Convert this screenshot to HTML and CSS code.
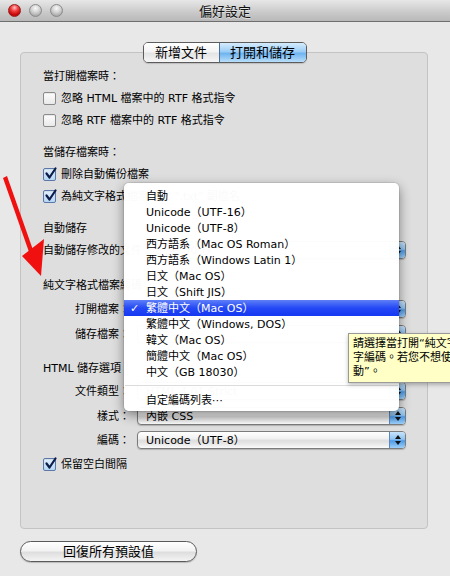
FILE: index.html
```html
<!DOCTYPE html>
<html lang="zh-Hant">
<head>
  <meta charset="UTF-8" />
  <title>偏好設定</title>
  <link rel="stylesheet" href="styles.css">
</head>
<body>
  <div class="window">
    <div class="titlebar">
      <div class="lights">
        <span class="light red"></span>
        <span class="light"></span>
        <span class="light"></span>
      </div>
      <div class="title">偏好設定</div>
      <div></div>
    </div>

    <div class="pane">
      <div class="tabs">
        <span class="tab">新增文件</span>
        <span class="tab on">打開和儲存</span>
      </div>

      <div class="row first">當打開檔案時：</div>
      <div class="row check"><span class="box"></span>忽略 HTML 檔案中的 RTF 格式指令</div>
      <div class="row check"><span class="box"></span>忽略 RTF 檔案中的 RTF 格式指令</div>

      <div class="row section">當儲存檔案時：</div>
      <div class="row check"><span class="box on"><svg viewBox="0 0 13 13"><path d="M2.5 6.5 L5.5 10.5 L11.5 1.5" /></svg></span>刪除自動備份檔案</div>
      <div class="row check"><span class="box on"><svg viewBox="0 0 13 13"><path d="M2.5 6.5 L5.5 10.5 L11.5 1.5" /></svg></span>為純文字格式檔案加上 ".txt" 副檔名</div>

      <div class="row section">自動儲存</div>
      <div class="row inline">
        <span>自動儲存修改的文件：</span>
        <div class="popup"><span class="val">每 30 秒</span><span class="cap"><svg viewBox="0 0 16 16"><path d="M5 7 L8 3 L11 7Z M5 9 L8 13 L11 9Z" /></svg></span></div>
      </div>

      <div class="row section2">純文字格式檔案編碼：</div>
      <div class="field f-open">
        <span class="lbl">打開檔案：</span>
        <div class="popup"><span class="val">繁體中文（Mac OS）</span><span class="cap"><svg viewBox="0 0 16 16"><path d="M5 7 L8 3 L11 7Z M5 9 L8 13 L11 9Z" /></svg></span></div>
      </div>
      <div class="field f-save">
        <span class="lbl">儲存檔案：</span>
        <div class="popup"><span class="val">自動</span><span class="cap"><svg viewBox="0 0 16 16"><path d="M5 7 L8 3 L11 7Z M5 9 L8 13 L11 9Z" /></svg></span></div>
      </div>

      <div class="row section3">HTML 儲存選項</div>
      <div class="field f-type">
        <span class="lbl">文件類型：</span>
        <div class="popup"><span class="val">HTML 4.01 Strict</span><span class="cap"><svg viewBox="0 0 16 16"><path d="M5 7 L8 3 L11 7Z M5 9 L8 13 L11 9Z" /></svg></span></div>
      </div>
      <div class="field f-style">
        <span class="lbl">樣式：</span>
        <div class="popup"><span class="val">內嵌 CSS</span><span class="cap"><svg viewBox="0 0 16 16"><path d="M5 7 L8 3 L11 7Z M5 9 L8 13 L11 9Z" /></svg></span></div>
      </div>
      <div class="field f-enc">
        <span class="lbl">編碼：</span>
        <div class="popup"><span class="val">Unicode（UTF-8）</span><span class="cap"><svg viewBox="0 0 16 16"><path d="M5 7 L8 3 L11 7Z M5 9 L8 13 L11 9Z" /></svg></span></div>
      </div>
      <div class="row check last"><span class="box on"><svg viewBox="0 0 13 13"><path d="M2.5 6.5 L5.5 10.5 L11.5 1.5" /></svg></span>保留空白間隔</div>
    </div>

    <button class="reset">回復所有預設值</button>

    <!-- 打開的編碼選單 -->
    <div class="menu">
      <div class="item">自動</div>
      <div class="item">Unicode（UTF-16）</div>
      <div class="item">Unicode（UTF-8）</div>
      <div class="item">西方語系（Mac OS Roman）</div>
      <div class="item">西方語系（Windows Latin 1）</div>
      <div class="item">日文（Mac OS）</div>
      <div class="item">日文（Shift JIS）</div>
      <div class="item sel"><span class="tick">✓</span>繁體中文（Mac OS）</div>
      <div class="item">繁體中文（Windows, DOS）</div>
      <div class="item">韓文（Mac OS）</div>
      <div class="item">簡體中文（Mac OS）</div>
      <div class="item">中文（GB 18030）</div>
      <div class="sep"></div>
      <div class="item">自定編碼列表⋯</div>
    </div>

    <div class="tip">請選擇當打開“純文字格式”檔案時所使用的文<br>字編碼。若您不想使用特定的編碼，請選擇“自<br>動”。</div>

    <svg class="arrow" viewBox="0 0 60 110" width="60" height="110">
      <path d="M3 6 L7 4 L33 78 L29 80Z" fill="#f01010" />
      <path d="M22 84 L44 67 L41 104Z" fill="#f01010" />
    </svg>
  </div>
</body>
</html>
```

FILE: styles.css
```css
* {
  margin: 0;
  padding: 0;
  box-sizing: border-box;
}
body {
  width: 450px;
  height: 576px;
  overflow: hidden;
  background: #e8e8e8;
}
.window {
  position: relative;
  width: 450px;
  height: 576px;
  overflow: hidden;
  background: #e8e8e8;
  font-family: "DejaVu Sans", "Noto Sans CJK TC", sans-serif;
  font-size: 11px;
  color: #000;
}

/* title bar */
.titlebar {
  display: grid;
  grid-template-columns: 1fr auto 1fr;
  align-items: center;
  height: 22px;
  background: linear-gradient(#e7e7e7, #c9c9c9 60%, #b9b9b9);
  border-bottom: 1px solid #6e6e6e;
}
.lights {
  display: flex;
  gap: 8px;
  padding-left: 8px;
}
.light {
  width: 13px;
  height: 13px;
  border-radius: 50%;
  border: 1px solid #8a8a8a;
  background: radial-gradient(circle at 50% 30%, #fafafa, #d0d0d0 45%, #a8a8a8 80%, #c8c8c8);
}
.light.red {
  border-color: #9a1a1a;
  background: radial-gradient(circle at 50% 25%, #ffc2c2 0, #f04040 35%, #c00000 75%, #e84848);
}
.title {
  font-size: 13px;
  color: #111;
  text-shadow: 0 1px 0 rgba(255,255,255,0.5);
}

/* group box */
.pane {
  margin: 30px 0 0 20px;
  width: 408px;
  padding: 0 21px 55px 22px;
  background: #dedede;
  border: 1px solid #c3c3c3;
  border-radius: 4px;
}
.tabs {
  display: flex;
  width: 164px;
  height: 21px;
  margin: -11px auto 0;
  border: 1px solid #5c5c5c;
  border-radius: 5px;
  overflow: hidden;
  font-size: 13px;
  line-height: 19px;
  box-shadow: 0 1px 1px rgba(0,0,0,0.15);
}
.tab {
  width: 75px;
  text-align: center;
  background: linear-gradient(#ffffff, #f4f4f4 45%, #e4e4e4 55%, #f6f6f6);
}
.tab.on {
  flex: 1;
  border-left: 1px solid #4c6f9a;
  background: linear-gradient(#d6ecfd, #9ccdf7 45%, #6fb4f1 55%, #b8def9);
}

.row {
  height: 18px;
  line-height: 19px;
  margin-top: 4px;
  white-space: nowrap;
}
.row.first { margin-top: 4px; }
.row.section { margin-top: 14px; }
.row.section2 { margin-top: 17px; }
.row.section3 { margin-top: 16px; }
.row.last { margin-top: 6px; }
.check {
  display: flex;
  align-items: center;
}
.box {
  width: 13px;
  height: 13px;
  margin-right: 5px;
  border: 1px solid #8b8b8b;
  border-radius: 2px;
  background: linear-gradient(#fdfdfd, #e9e9e9);
  box-shadow: inset 0 1px 1px rgba(0,0,0,0.08);
}
.box.on {
  border-color: #5a78a8;
  background: linear-gradient(#e4f0fc, #b6d6f5);
}
.box svg {
  display: block;
  width: 13px;
  height: 13px;
  margin: -2px 0 0 0;
  overflow: visible;
}
.box path {
  fill: none;
  stroke: #0d1d4a;
  stroke-width: 2.2;
  stroke-linecap: round;
  stroke-linejoin: round;
}

.inline {
  display: flex;
  gap: 7px;
}
.inline .popup { flex: 1; }

.field {
  display: grid;
  grid-template-columns: 87px 1fr;
  column-gap: 7px;
  height: 18px;
  line-height: 19px;
}
.f-open { margin-top: 6px; }
.f-save { margin-top: 7px; }
.f-type { margin-top: 5px; }
.f-style { margin-top: 7px; }
.f-enc { margin-top: 6px; }
.lbl {
  text-align: right;
  white-space: nowrap;
}

.popup {
  display: flex;
  height: 18px;
  border: 1px solid #7b7b7b;
  border-radius: 4px;
  overflow: hidden;
  background: linear-gradient(#ffffff, #f1f1f1 40%, #dddddd 55%, #ececec 80%, #fbfbfb);
  box-shadow: 0 1px 1px rgba(0,0,0,0.2);
}
.popup .val {
  flex: 1;
  padding-left: 8px;
  line-height: 17px;
  white-space: nowrap;
  overflow: hidden;
}
.popup .cap {
  width: 16px;
  border-left: 1px solid #5f86b8;
  background: linear-gradient(#c8e3fb, #8ec4f3 45%, #4d9ae8 55%, #9ed0f8);
}
.cap svg {
  display: block;
  width: 16px;
  height: 16px;
}
.cap path { fill: #111; }

.reset {
  display: block;
  margin: 12px 0 0 20px;
  width: 177px;
  height: 21px;
  border: 1px solid #5a5a5a;
  border-radius: 11px;
  background: linear-gradient(#ffffff, #f3f3f3 45%, #dedede 55%, #f4f4f4);
  font-family: "DejaVu Sans", "Noto Sans CJK TC", sans-serif;
  font-size: 13px;
  line-height: 19px;
  color: #000;
  box-shadow: 0 1px 1px rgba(0,0,0,0.2);
}

/* open popup menu */
.menu {
  position: absolute;
  left: 124px;
  top: 183px;
  width: 275px;
  height: 228px;
  padding-top: 5px;
  background: rgba(255,255,255,0.98);
  border-radius: 5px;
  box-shadow: 0 4px 12px rgba(0,0,0,0.45), 0 0 0 1px rgba(0,0,0,0.08);
}
.item {
  position: relative;
  height: 16px;
  line-height: 17px;
  padding-left: 22px;
  white-space: nowrap;
}
.item.sel {
  color: #fff;
  background: linear-gradient(#5f7ff7, #2448f5 50%, #1538f2);
}
.tick {
  position: absolute;
  left: 6px;
  font-weight: bold;
}
.sep {
  height: 12px;
  margin: 0 1px;
  background: linear-gradient(transparent 5px, #dcdcdc 5px, #dcdcdc 6px, transparent 6px);
}

/* tooltip */
.tip {
  position: absolute;
  left: 348px;
  top: 333px;
  width: 220px;
  height: 50px;
  padding: 3px 4px;
  background: #ffffc6;
  border: 1px solid #9a9a9a;
  line-height: 14px;
  white-space: nowrap;
  box-shadow: 0 2px 4px rgba(0,0,0,0.25);
}

.arrow {
  position: absolute;
  left: 0;
  top: 172px;
}
```
